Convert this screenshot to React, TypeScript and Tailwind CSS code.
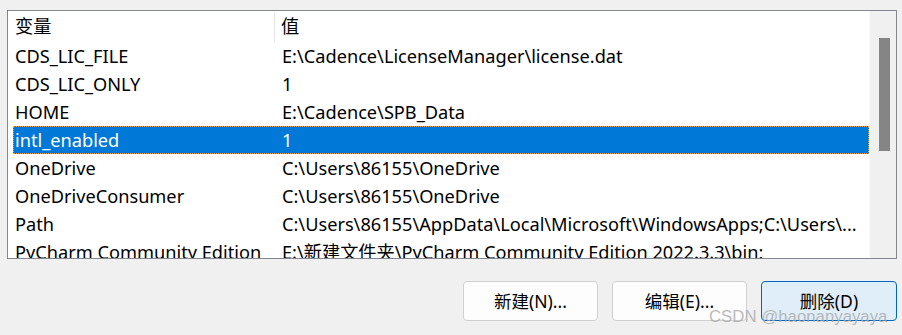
const rows = [
  ["CDS_LIC_FILE", "E:\\Cadence\\LicenseManager\\license.dat"],
  ["CDS_LIC_ONLY", "1"],
  ["HOME", "E:\\Cadence\\SPB_Data"],
  ["intl_enabled", "1"],
  ["OneDrive", "C:\\Users\\86155\\OneDrive"],
  ["OneDriveConsumer", "C:\\Users\\86155\\OneDrive"],
  ["Path", "C:\\Users\\86155\\AppData\\Local\\Microsoft\\WindowsApps;C:\\Users\\..."],
  ["PyCharm Community Edition", "E:\\新建文件夹\\PyCharm Community Edition 2022.3.3\\bin;"],
]

const selected = 3

export default function App() {
  return (
    <div className="relative w-[902px] h-[335px] overflow-hidden bg-[#f0f0f0] pt-[10px] pl-[7px] font-['Noto_Sans','Noto_Sans_CJK_SC',sans-serif] text-[18.2px] text-black">
      <div className="flex w-[890px] h-[249px] border border-[#828790] bg-white">
        <div className="flex-1 overflow-hidden pl-[5px]">
          {/* header */}
          <div className="flex h-[31px] items-center">
            <div className="w-[262px] h-[30px] flex items-center pl-[2px] pt-[1px] border-r border-[#e5e5e5]">变量</div>
            <div className="pl-[6px] pt-[1px]">值</div>
          </div>
          {rows.map(([name, value], i) => (
            <div
              key={name}
              className={
                i === selected
                  ? "flex h-[28px] items-center pt-[2px] whitespace-nowrap bg-[#0078d7] text-white border border-dotted border-[#e8a050]"
                  : "flex h-[28px] items-center pt-[2px] whitespace-nowrap border border-transparent"
              }
            >
              <div className="w-[262px] shrink-0 pl-[1px] overflow-hidden">{name}</div>
              <div className="pl-[6px]">{value}</div>
            </div>
          ))}
        </div>
        <div className="w-[27px] shrink-0 bg-[#f0f0f0] border-l border-[#fafafa] pt-[27px] pl-[9px]">
          <div className="w-[11px] h-[113px] bg-[#858585]" />
        </div>
      </div>

      <div className="flex justify-end gap-[14px] mt-[22px] pr-[5px]">
        <button className="w-[135px] h-[40px] rounded-[4px] border border-[#d0d0d0] bg-[#fdfdfd] text-[17.5px]">新建(N)...</button>
        <button className="w-[135px] h-[40px] rounded-[4px] border border-[#d0d0d0] bg-[#fdfdfd] text-[17.5px]">编辑(E)...</button>
        <button className="w-[136px] h-[40px] rounded-[4px] border border-[#0067c0] bg-[#e0eef9] text-[17.5px]">删除(D)</button>
      </div>

      <div className="absolute left-[709px] top-[304px] text-[16.8px] text-[#a8a8a8]/80 font-['Liberation_Sans',sans-serif] whitespace-nowrap">
        CSDN @haonanyayaya
      </div>
    </div>
  )
}
